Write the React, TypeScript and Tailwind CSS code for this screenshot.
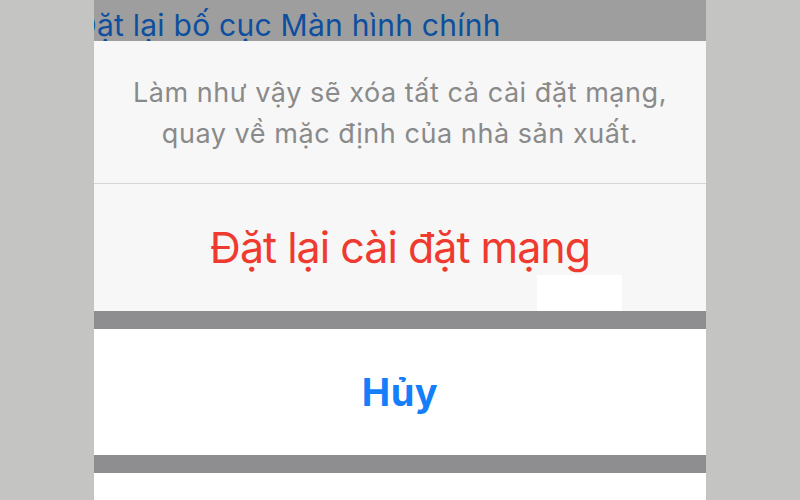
export default function App() {
  return (
    <div className="flex h-[500px] w-[800px] bg-[#c4c4c2] font-['Inter','Liberation_Sans',sans-serif]">
      <div className="w-[94px] shrink-0" />
      <div className="flex w-[612px] shrink-0 flex-col overflow-hidden">
        {/* dimmed settings row behind the sheet */}
        <div className="h-[41px] shrink-0 overflow-hidden bg-[#9e9e9e] pt-[10px]">
          <span className="-ml-[19px] block whitespace-nowrap text-[30px] leading-none tracking-[0.25px] text-[#0d4f9e]">
            Đặt lại bố cục Màn hình chính
          </span>
        </div>

        <div className="flex h-[142px] shrink-0 flex-col items-center justify-center bg-[#f7f7f7] pt-[2px] text-center text-[27px] leading-[41px] tracking-[0.55px] text-[#8a8a8a]">
          <p>Làm như vậy sẽ xóa tất cả cài đặt mạng,</p>
          <p>quay về mặc định của nhà sản xuất.</p>
        </div>
        <div className="h-px shrink-0 bg-[#d6d6d6]" />

        <div className="relative flex h-[127px] shrink-0 items-center justify-center bg-[#f7f7f7]">
          <span className="text-[43px] leading-none tracking-[-1px] text-[#ef3a30]">Đặt lại cài đặt mạng</span>
          <div className="absolute left-[443px] top-[91px] h-[36px] w-[85px] bg-white" />
        </div>

        <div className="h-[18px] shrink-0 bg-[#8e8e90]" />

        <div className="flex h-[126px] shrink-0 items-center justify-center bg-white">
          <span className="text-[38px] font-bold leading-none tracking-[0.5px] text-[#157efb]">Hủy</span>
        </div>

        <div className="h-[18px] shrink-0 bg-[#8e8e90]" />
        <div className="flex-1 bg-white" />
      </div>
    </div>
  );
}
